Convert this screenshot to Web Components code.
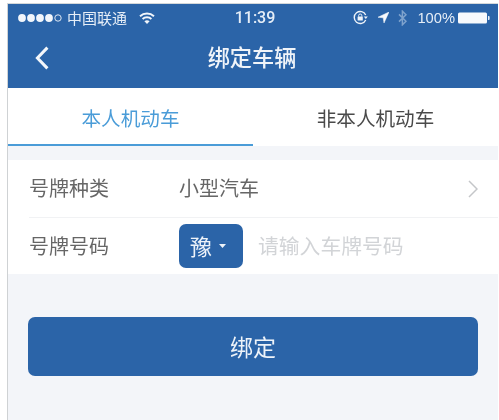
<!DOCTYPE html>
<html>
<head>
<meta charset="utf-8">
<style>
html, body { margin: 0; height: 100%; background: #fff; overflow: hidden; }
body { font-family: "Liberation Sans", "Noto Sans CJK SC", sans-serif; }
</style>
</head>
<body>
<phone-frame>
  <status-bar></status-bar>
  <nav-bar title="绑定车辆"></nav-bar>
  <tab-bar></tab-bar>
  <plate-form></plate-form>
  <bind-button>绑定</bind-button>
</phone-frame>

<script>
const CJK = '"Noto Sans CJK SC", sans-serif';

class PhoneFrame extends HTMLElement {
    constructor() {
        super();
        this.attachShadow({ mode: "open" });
        this.shadowRoot.innerHTML = `
            <style>
            :host {
                display: block;
                height: 416px;
                margin: 3px 1px 0 7px;
                border-top: 1px solid #d4d8da;
                border-left: 1px solid #cfd2d4;
                background: #f3f5f9;
                filter: blur(0.5px);
                overflow: hidden;
            }
            </style>
            <slot></slot>
        `;
    }
}
customElements.define("phone-frame", PhoneFrame);

class StatusBar extends HTMLElement {
    constructor() {
        super();
        this.attachShadow({ mode: "open" });
        this.shadowRoot.innerHTML = `
            <style>
            :host {
                display: grid;
                grid-template-columns: 1fr auto 1fr;
                align-items: center;
                height: 27px;
                padding: 0 8px 0 9px;
                color: #e6eef7;
                background: #2b64a8;
                font: 15px "Liberation Sans", ${CJK};
            }
            .left, .right { display: flex; align-items: center; }
            .right { justify-content: flex-end; }
            .carrier { margin-left: 4px; }
            .wifi { margin-left: 12px; }
            .time { font: 500 16px Roboto, sans-serif; padding-left: 3px; }
            .arrow { margin-left: 10px; }
            .bt { margin-left: 9px; }
            .pct { margin-left: 10px; font-size: 14.7px; }
            .batt { margin-left: 3px; }
            </style>
            <div class="left">
                <svg width="46" height="10" viewBox="0 0 46 10">
                    <g fill="#f2f6fb">
                        <circle cx="5" cy="5" r="3.9"/><circle cx="14" cy="5" r="3.9"/>
                        <circle cx="23" cy="5" r="3.9"/><circle cx="32" cy="5" r="3.9"/>
                    </g>
                    <circle cx="41" cy="5" r="3.2" fill="none" stroke="#dfe8f3" stroke-width="1"/>
                </svg>
                <span class="carrier">中国联通</span>
                <svg class="wifi" width="16" height="12" viewBox="0 0 16 12" fill="none" stroke="#f2f6fb" stroke-width="2">
                    <path d="M1 4.2C5 .6 11 .6 15 4.2"/>
                    <path d="M3.6 7C6 4.8 10 4.8 12.4 7"/>
                    <path d="M8 12L5.4 9.2C7 8 9 8 10.6 9.2Z" fill="#f2f6fb" stroke="none"/>
                </svg>
            </div>
            <div class="time">11:39</div>
            <div class="right">
                <svg width="15" height="15" viewBox="0 0 15 15" fill="none" stroke="#eef3f9" stroke-width="1.4">
                    <path d="M12.7 10A6 6 0 1 1 12.7 5"/>
                    <path d="M10.8 6.6h4l-2 2.4z" fill="#eef3f9" stroke="none"/>
                    <rect x="4.6" y="6.4" width="5.2" height="4" rx=".5" fill="#eef3f9" stroke="none"/>
                    <path d="M5.6 6.6V5.6a1.6 1.6 0 0 1 3.2 0v1" stroke-width="1"/>
                </svg>
                <svg class="arrow" width="11" height="11" viewBox="0 0 11 11">
                    <path d="M11 0L0 5.2l5.2.6.8 5.2z" fill="#f8fafd" stroke="#f8fafd" stroke-width=".5"/>
                </svg>
                <svg class="bt" width="9" height="16" viewBox="0 0 9 16" fill="none" stroke="#7fa3cd" stroke-width="1.5">
                    <path d="M1 4.4l7 6.8-3.6 3.6V1.2L8 4.8 1 11.6"/>
                </svg>
                <span class="pct">100%</span>
                <svg class="batt" width="32" height="12" viewBox="0 0 32 12">
                    <rect x="0" y="0.5" width="29" height="11" rx="1.5" fill="#f7f9fc"/>
                    <path d="M30 4h.6a1 1 0 0 1 1 1v2a1 1 0 0 1-1 1H30z" fill="#e6eef7"/>
                </svg>
            </div>
        `;
    }
}
customElements.define("status-bar", StatusBar);

class NavBar extends HTMLElement {
    constructor() {
        super();
        this.attachShadow({ mode: "open" });
        this.shadowRoot.innerHTML = `
            <style>
            :host {
                display: flex;
                align-items: center;
                height: 57px;
                padding-left: 27px;
                padding-bottom: 3px;
                box-sizing: border-box;
                color: #f0f4f9;
                background: #2b64a8;
            }
            .title {
                flex: 1;
                text-align: center;
                padding-right: 43px;
                margin-bottom: 4px;
                font: 500 22.2px ${CJK};
            }
            </style>
            <svg width="14" height="24" viewBox="0 0 14 24" fill="none" stroke="#f4f7fb" stroke-width="3">
                <path d="M12.4 1.6L2.4 12l10 10.4"/>
            </svg>
            <div class="title">${this.getAttribute("title")}</div>
        `;
    }
}
customElements.define("nav-bar", NavBar);

class TabBar extends HTMLElement {
    constructor() {
        super();
        this.attachShadow({ mode: "open" });
        this.shadowRoot.innerHTML = `
            <style>
            :host {
                display: grid;
                grid-template-columns: 245px 1fr;
                height: 58px;
                background: #fff;
                font: 19.6px ${CJK};
            }
            div {
                display: flex;
                align-items: center;
                justify-content: center;
                padding-top: 2px;
                box-sizing: border-box;
                color: #4a4a4a;
            }
            .on {
                color: #4a9cd8;
                border-bottom: 2px solid #4a9cd8;
            }
            .off { padding-bottom: 2px; }
            </style>
            <div class="on">本人机动车</div>
            <div class="off">非本人机动车</div>
        `;
    }
}
customElements.define("tab-bar", TabBar);

class PlateForm extends HTMLElement {
    constructor() {
        super();
        this.attachShadow({ mode: "open" });
        this.shadowRoot.innerHTML = `
            <style>
            :host {
                display: block;
                margin-top: 14px;
                padding-left: 21px;
                background: #fff;
                font: 20px ${CJK};
                color: #666;
            }
            .row {
                display: flex;
                align-items: center;
                height: 57px;
                box-sizing: border-box;
            }
            .row + .row { border-top: 1px solid #f1f2f4; }
            .label { width: 150px; padding-bottom: 2px; }
            .value { flex: 1; padding-bottom: 2px; }
            .more { margin-right: 20px; }
            .plate {
                display: flex;
                align-items: center;
                width: 64px;
                height: 44px;
                box-sizing: border-box;
                padding: 0 0 2px 11px;
                border-radius: 7px;
                color: #eef3f9;
                background: #2b64a8;
                font-size: 22px;
            }
            .plate svg { margin: 2px 0 0 7px; }
            .hint {
                margin-left: 15px;
                padding-bottom: 2px;
                color: #d2d4d7;
                font-size: 20.8px;
            }
            </style>
            <div class="row">
                <span class="label">号牌种类</span>
                <span class="value">小型汽车</span>
                <svg class="more" width="10" height="18" viewBox="0 0 10 18" fill="none" stroke="#c4c6c9" stroke-width="1.5">
                    <path d="M1 1l8 8-8 8"/>
                </svg>
            </div>
            <div class="row">
                <span class="label">号牌号码</span>
                <span class="plate">豫<svg width="7" height="4" viewBox="0 0 7 4"><path d="M0 0h7L3.5 4z" fill="#eef3f9"/></svg></span>
                <span class="hint">请输入车牌号码</span>
            </div>
        `;
    }
}
customElements.define("plate-form", PlateForm);

class BindButton extends HTMLElement {
    constructor() {
        super();
        this.attachShadow({ mode: "open" });
        this.shadowRoot.innerHTML = `
            <style>
            :host {
                display: flex;
                align-items: center;
                justify-content: center;
                height: 59px;
                margin: 43px 20px 0 20px;
                padding-bottom: 2px;
                box-sizing: border-box;
                border-radius: 7px;
                color: #eef3f9;
                background: #2b64a8;
                font: 23px ${CJK};
            }
            </style>
            <slot></slot>
        `;
    }
}
customElements.define("bind-button", BindButton);
</script>
</body>
</html>
